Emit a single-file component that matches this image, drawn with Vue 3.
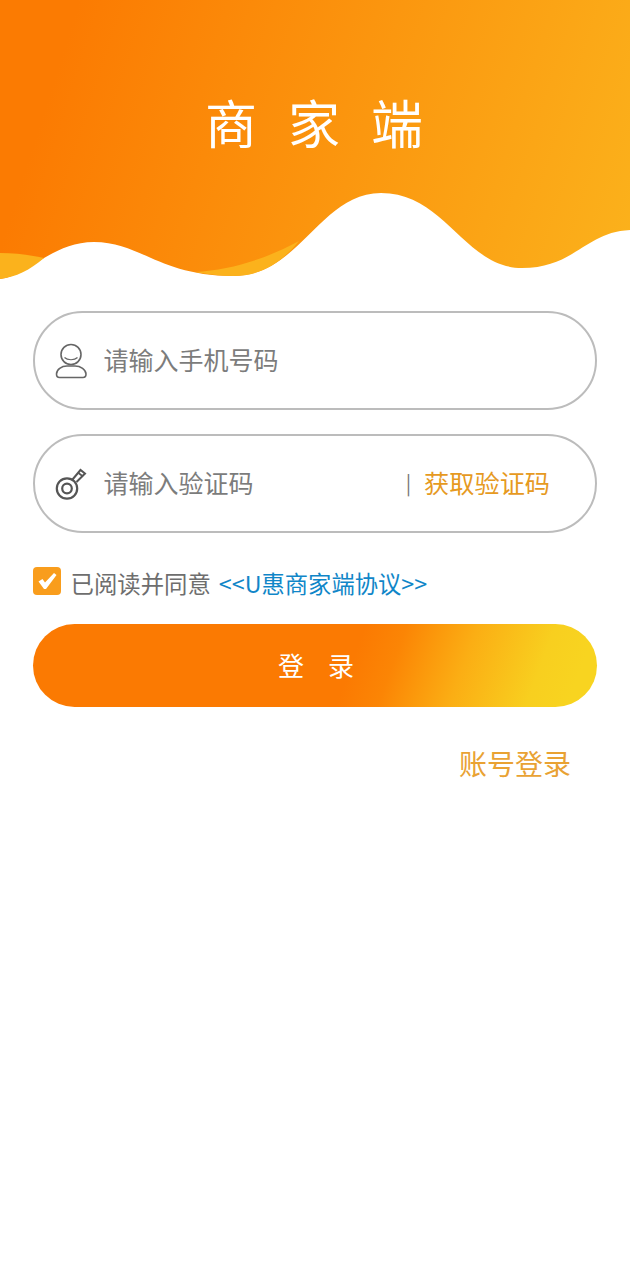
<script setup>
const title = '商家端'
</script>

<template>
  <div class="page">
    <header class="hero">
      <svg class="wave" width="630" height="285" viewBox="0 0 630 285" aria-hidden="true">
        <defs>
          <linearGradient id="heroFill" gradientUnits="userSpaceOnUse" x1="60" y1="60" x2="650" y2="250">
            <stop offset="0" stop-color="#fb7b02" />
            <stop offset="1" stop-color="#fbb31c" />
          </linearGradient>
        </defs>
        <path fill="url(#heroFill)" d="M0 279C30 275 52 242 94 242C140 242 160 276 233 276C300 276 320 193 381 193C445 193 465 268 522 268C575 268 585 232 630 230V0H0Z" />
        <path fill="#fbb21c" d="M0 253C16 253 30 255 44 258C30 270 16 277 0 279Z" />
        <path fill="#fbb21c" d="M195 272C232 270 268 258 299 241C282 262 262 276 233 276C220 276 207 274 195 272Z" />
      </svg>
      <h1 class="title">{{ title }}</h1>
    </header>

    <main class="form">
      <div class="field">
        <svg class="icon" width="34" height="36" viewBox="0 0 34 36" fill="none" stroke="#666" stroke-width="1.600" aria-hidden="true">
          <circle cx="16" cy="11.500" r="10" />
          <path d="M9.500 14.500C12.500 17.500 19.500 17.500 22.500 14.500" stroke-width="1.200" />
          <path d="M1.500 31C1.500 26.500 6.500 23 12 23H20C25.500 23 31 26.500 31 31C31 33.500 30 34.500 28 34.500H4.500C2.500 34.500 1.500 33.500 1.500 31Z" />
        </svg>
        <span class="hint">请输入手机号码</span>
      </div>

      <div class="field second">
        <svg class="icon" width="34" height="34" viewBox="0 0 34 34" fill="none" stroke="#555" stroke-width="2.200" aria-hidden="true">
          <circle cx="12" cy="21.500" r="10.200" />
          <circle cx="12" cy="21.500" r="4.800" />
          <path d="M17.500 12.500L25.500 3L30 6.500L21.500 15" stroke-width="2" />
          <path d="M23.500 6L28 9.500" stroke-width="1.600" />
        </svg>
        <span class="hint">请输入验证码</span>
        <span class="pipe">|</span>
        <span class="code">获取验证码</span>
      </div>

      <div class="agree">
        <span class="check">
          <svg width="20" height="18" viewBox="0 0 20 18" aria-hidden="true">
            <path d="M1.500 9.500L5.500 7L8 10.500L17 1L19.500 3L9 17H7Z" fill="#fff" />
          </svg>
        </span>
        <span class="agree-text">已阅读并同意</span>
        <span class="agree-link">&lt;&lt;U惠商家端协议&gt;&gt;</span>
      </div>

      <button class="login" type="button">登录</button>

      <div class="alt">账号登录</div>
    </main>
  </div>
</template>

<style>
html, body { margin: 0; background: #fff; }
</style>

<style scoped>
.page {
  width: 630px;
  height: 1280px;
  background: #fff;
  overflow: hidden;
  font-family: "Noto Sans CJK SC", "Noto Sans", sans-serif;
}
.hero { position: relative; height: 285px; }
.wave { display: block; }
.title {
  position: absolute;
  top: 83px;
  left: 205px;
  margin: 0;
  font-size: 52px;
  line-height: 78px;
  font-weight: 400;
  letter-spacing: 31px;
  color: #fff;
  white-space: nowrap;
}
.form {
  display: flex;
  flex-direction: column;
  padding: 26px 33px 0;
}
.field {
  display: flex;
  align-items: center;
  box-sizing: border-box;
  height: 99px;
  padding: 0 45px 0 19.500px;
  border: 2px solid #bcbcbc;
  border-radius: 50px;
}
.second { margin-top: 24px; }
.icon { flex: none; width: 34px; }
.hint {
  margin-left: 15px;
  padding-bottom: 4px;
  font-size: 25px;
  font-weight: 400;
  color: #7c7c7c;
}
.pipe {
  margin-left: auto;
  padding-bottom: 2px;
  font-size: 20px;
  color: #777;
}
.code {
  margin-left: 13px;
  padding-bottom: 4px;
  font-size: 25.200px;
  font-weight: 400;
  color: #e69a1f;
}
.agree {
  display: flex;
  align-items: center;
  height: 30px;
  margin-top: 35px;
}
.check {
  display: flex;
  align-items: center;
  justify-content: center;
  width: 28px;
  height: 28px;
  margin-top: -5px;
  border-radius: 4px;
  background: #f99d1c;
}
.agree-text {
  margin-left: 9.500px;
  font-size: 23.400px;
  font-weight: 400;
  color: #6e6e6e;
}
.agree-link {
  margin-left: 8px;
  font-size: 23.300px;
  font-weight: 400;
  color: #1086c8;
}
.login {
  height: 83px;
  margin-top: 26px;
  padding: 0 0 2px 26px;
  border: 0;
  border-radius: 42px;
  background: linear-gradient(110deg, #fb7a02 0%, #fb7a02 56%, #fb8505 63%, #fb9a0c 69%, #fbae14 75%, #f8cf1f 88%, #f8d420 95%);
  font-family: inherit;
  font-size: 26px;
  font-weight: 400;
  letter-spacing: 24px;
  color: #fff;
}
.alt {
  align-self: flex-end;
  margin-top: 35px;
  margin-right: 26px;
  font-size: 28px;
  line-height: 42px;
  font-weight: 400;
  color: #e9a233;
}
</style>
